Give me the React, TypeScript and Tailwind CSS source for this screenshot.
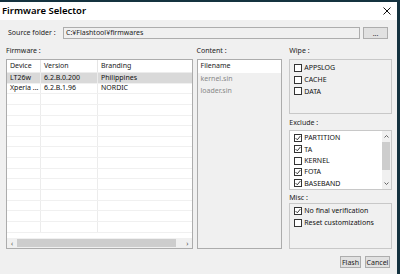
import React from 'react';

const font = { fontFamily: '"Noto Sans", "Open Sans", sans-serif' };

const Check = ({ on, label }: { on?: boolean; label: string }) => (
  <div className="flex items-center h-[11.7px] gap-[2px]">
    <span className="w-[8px] h-[8px] border border-[#333] bg-white flex items-center justify-center">
      {on && (
        <svg width="6" height="6" viewBox="0 0 6 6">
          <path d="M0.6 3.1 L2.3 4.8 L5.4 1" fill="none" stroke="#222" strokeWidth="0.9" />
        </svg>
      )}
    </span>
    <span className="text-[7px] text-[#111] leading-none whitespace-nowrap">{label}</span>
  </div>
);

const rows = [
  { d: 'LT26w', v: '6.2.B.0.200', b: 'Philippines', sel: true },
  { d: 'Xperia ...', v: '6.2.B.1.96', b: 'NORDIC' },
];

export default function App() {
  return (
    <div className="w-[400px] h-[274px] bg-[#14323f] flex overflow-hidden" style={font}>
      <div className="w-[397px] mt-[2px] flex flex-col bg-[#f0f0f0]">
        {/* title bar */}
        <div className="h-[18px] bg-white flex items-center justify-between pl-[2px] pr-[6px]">
          <span className="text-[9.5px] font-semibold text-black leading-none">Firmware Selector</span>
          <svg width="8" height="8" viewBox="0 0 8 8">
            <path d="M0.5 0.5 L7.5 7.5 M7.5 0.5 L0.5 7.5" stroke="#111" strokeWidth="1" />
          </svg>
        </div>

        <div className="flex-1 pl-[6px] pr-[5px] flex flex-col">
          {/* source folder */}
          <div className="flex items-center mt-[7px] h-[12px]">
            <span className="w-[57px] pl-[2px] text-[7px] text-[#222]">Source folder :</span>
            <div className="w-[297px] h-[12px] border border-[#adadad] bg-[#f0f0f0] flex items-center pl-[2px] text-[7px] text-[#222]">
              C:¥Flashtool¥firmwares
            </div>
            <button className="ml-[3px] w-[25px] h-[12px] border border-[#adadad] bg-[#e1e1e1] text-[7px] leading-none text-[#333]">...</button>
          </div>

          <div className="flex mt-[6px] gap-[4px]">
            {/* firmware */}
            <div className="w-[187px] flex flex-col">
              <span className="h-[14px] text-[7px] text-[#222] leading-[12px]">Firmware :</span>
              <div className="h-[190px] border border-[#acacac] bg-white flex flex-col">
                <div className="h-[13px] flex text-[7px] text-[#222] border-b border-[#ececec]">
                  <span className="w-[34px] pl-[3px] flex items-center border-r border-[#e5e5e5]">Device</span>
                  <span className="w-[57px] pl-[3px] flex items-center border-r border-[#e5e5e5]">Version</span>
                  <span className="flex-1 pl-[3px] flex items-center">Branding</span>
                </div>
                <div className="flex-1 flex flex-col overflow-hidden">
                  {Array.from({ length: 15 }).map((_, i) => {
                    const r = rows[i];
                    return (
                      <div
                        key={i}
                        className={`h-[10.65px] shrink-0 flex text-[7px] text-[#111] border-b border-[#f0f0f0] whitespace-nowrap ${r?.sel ? 'bg-[#d9d9d9]' : ''}`}
                      >
                        <span className="w-[34px] pl-[3px] flex items-center overflow-hidden border-r border-[#ececec]">{r?.d}</span>
                        <span className="w-[57px] pl-[3px] flex items-center border-r border-[#ececec]">{r?.v}</span>
                        <span className="flex-1 pl-[3px] flex items-center">{r?.b}</span>
                      </div>
                    );
                  })}
                </div>
                <div className="h-[10px] bg-[#f0f0f0] flex items-center text-[7px] text-[#555]">
                  <span className="w-[10px] text-center leading-none">‹</span>
                  <div className="w-[159px] h-[8px] bg-[#cdcdcd]" />
                  <span className="flex-1 text-right pr-[3px] leading-none">›</span>
                </div>
              </div>
            </div>

            {/* content */}
            <div className="w-[86px] flex flex-col">
              <span className="h-[14px] text-[7px] text-[#222] leading-[12px]">Content :</span>
              <div className="h-[190px] border border-[#acacac] bg-[#f0f0f0] flex flex-col">
                <div className="h-[13px] bg-white flex items-center pl-[3px] text-[7px] text-[#222]">Filename</div>
                <div className="h-[12px] flex items-center pl-[3px] text-[7px] text-[#888]">kernel.sin</div>
                <div className="h-[12px] flex items-center pl-[3px] text-[7px] text-[#888]">loader.sin</div>
              </div>
            </div>

            {/* right */}
            <div className="ml-[3px] w-[103px] flex flex-col">
              <span className="h-[14px] text-[7px] text-[#222] leading-[12px]">Wipe :</span>
              <div className="h-[55px] border border-[#c8c8c8] px-[4px] pt-[2px] flex flex-col">
                <Check label="APPSLOG" />
                <Check label="CACHE" />
                <Check label="DATA" />
              </div>
              <span className="h-[16px] pt-[3px] text-[7px] text-[#222] leading-[12px]">Exclude :</span>
              <div className="h-[60px] border border-[#c8c8c8] bg-white flex">
                <div className="flex-1 pl-[4px] pt-[1px] flex flex-col">
                  <Check on label="PARTITION" />
                  <Check on label="TA" />
                  <Check label="KERNEL" />
                  <Check on label="FOTA" />
                  <Check on label="BASEBAND" />
                </div>
                <div className="w-[9px] bg-[#f0f0f0] flex flex-col items-center">
                  <svg width="9" height="11" viewBox="0 0 9 11">
                    <path d="M2.5 6.5 L4.5 4.5 L6.5 6.5" fill="none" stroke="#555" strokeWidth="0.9" />
                  </svg>
                  <div className="w-[8px] h-[28px] bg-[#cdcdcd]" />
                  <div className="flex-1" />
                  <svg width="9" height="11" viewBox="0 0 9 11">
                    <path d="M2.5 4.5 L4.5 6.5 L6.5 4.5" fill="none" stroke="#555" strokeWidth="0.9" />
                  </svg>
                </div>
              </div>
              <span className="h-[13px] pt-[2px] text-[7px] text-[#222] leading-[12px]">Misc :</span>
              <div className="h-[46px] border border-[#c8c8c8] pl-[4px] pt-[1px] flex flex-col">
                <Check on label="No final verification" />
                <Check label="Reset customizations" />
              </div>
            </div>
          </div>

          {/* buttons */}
          <div className="flex justify-end gap-[4px] mt-[7px] pr-[2px]">
            <button className="w-[21px] h-[12px] border border-[#adadad] bg-[#e1e1e1] text-[7px] leading-none text-[#222]">Flash</button>
            <button className="w-[25px] h-[12px] border border-[#adadad] bg-[#e1e1e1] text-[7px] leading-none text-[#222]">Cancel</button>
          </div>
        </div>
      </div>
    </div>
  );
}
